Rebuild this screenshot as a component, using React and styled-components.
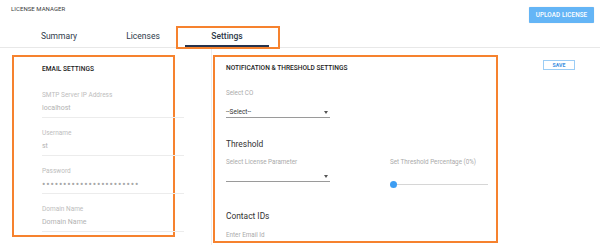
import styled, { createGlobalStyle } from "styled-components";

const GlobalStyle = createGlobalStyle`
  body {
    margin: 0;
    background: #fff;
    font-family: Roboto, "Liberation Sans", sans-serif;
    overflow: hidden;
  }
`;

const emailFields = [
  { label: "SMTP Server IP Address", value: "localhost" },
  { label: "Username", value: "st" },
  { label: "Password", value: "•".repeat(23), secret: true },
  { label: "Domain Name", value: "Domain Name" },
];

const App = () => {
  return (
    <Page>
      <GlobalStyle />
      <Header>
        <AppTitle>LICENSE MANAGER</AppTitle>
        <UploadButton>UPLOAD LICENSE</UploadButton>
      </Header>
      <TabBar>
        <Tab>Summary</Tab>
        <Tab>Licenses</Tab>
        <Tab $active $marked>
          Settings
        </Tab>
      </TabBar>
      <Content>
        <EmailBox>
          <SectionTitle>EMAIL SETTINGS</SectionTitle>
          {emailFields.map((f) => (
            <Field key={f.label}>
              <FieldLabel>{f.label}</FieldLabel>
              <FieldValue $secret={f.secret}>{f.value}</FieldValue>
            </Field>
          ))}
        </EmailBox>
        <RightPanel>
          <NotifyBox>
            <SectionTitle>NOTIFICATION &amp; THRESHOLD SETTINGS</SectionTitle>
            <Label $top={16}>Select CO</Label>
            <Select $top={9}>
              <span>--Select--</span>
              <Caret />
            </Select>
            <Heading $top={21}>Threshold</Heading>
            <Row>
              <Column $width={104}>
                <Label>Select License Parameter</Label>
                <Select $top={4}>
                  <span />
                  <Caret />
                </Select>
              </Column>
              <Column $width={98}>
                <Label>Set Threshold Percentage (0%)</Label>
                <Slider>
                  <Thumb />
                </Slider>
              </Column>
            </Row>
            <Heading $top={26}>Contact IDs</Heading>
            <Label $top={10}>Enter Email Id</Label>
          </NotifyBox>
          <SaveButton>SAVE</SaveButton>
        </RightPanel>
      </Content>
    </Page>
  );
};

export default App;

const Page = styled.div`
  width: 600px;
  height: 245px;
  overflow: hidden;
`;

const Header = styled.div`
  display: flex;
  justify-content: space-between;
  align-items: flex-start;
  height: 26px;
  padding: 0 6px 0 11px;
  box-sizing: border-box;
`;

const AppTitle = styled.div`
  margin-top: 5px;
  font-size: 6px;
  line-height: 8px;
  color: #3a3a3a;
  letter-spacing: 0.05px;
`;

const UploadButton = styled.button`
  margin-top: 7px;
  width: 65px;
  height: 16px;
  padding: 0;
  border: none;
  border-radius: 1px;
  background: #64b5f6;
  color: #fff;
  font-family: Roboto, "Liberation Sans", sans-serif;
  font-size: 6.3px;
  font-weight: 500;
  letter-spacing: 0.1px;
  box-shadow: 0 0 1px rgba(0, 0, 0, 0.2);
`;

const TabBar = styled.div`
  display: flex;
  padding-left: 17px;
  border-bottom: 1px solid #e8e8e8;
`;

const Tab = styled.div`
  position: relative;
  width: 84px;
  height: 21px;
  box-sizing: border-box;
  padding-top: 5px;
  text-align: center;
  font-size: 8.5px;
  line-height: 10px;
  color: #2f3a4a;
  font-weight: ${(p) => (p.$active ? 500 : 400)};
  border-bottom: 2px solid ${(p) => (p.$active ? "#27344d" : "transparent")};

  ${(p) =>
    p.$marked &&
    `
    &::after {
      content: "";
      position: absolute;
      top: 0;
      left: -9px;
      right: -11px;
      bottom: -4px;
      border: 2px solid #f6822e;
    }
  `}
`;

const Content = styled.div`
  display: flex;
  height: 197px;
`;

const EmailBox = styled.div`
  margin: 7px 0 0 12px;
  width: 163px;
  height: 182px;
  box-sizing: border-box;
  border: 2px solid #f6822e;
  padding: 7px 0 0 28px;
`;

const SectionTitle = styled.div`
  font-size: 6.6px;
  line-height: 10px;
  font-weight: 500;
  color: #222;
  margin-bottom: 6px;
`;

const Field = styled.div`
  width: 142px;
  padding: 11px 0 4px;
  border-bottom: 1px solid #ececec;
`;

const FieldLabel = styled.div`
  font-size: 6.5px;
  line-height: 9px;
  color: #bdbdbd;
  margin-bottom: 4px;
`;

const FieldValue = styled.div`
  font-size: ${(p) => (p.$secret ? "10px" : "7px")};
  line-height: 9px;
  color: ${(p) => (p.$secret ? "#a8a8a8" : "#b3b3b3")};
  letter-spacing: ${(p) => (p.$secret ? "0.85px" : "0")};
`;

const RightPanel = styled.div`
  flex: 1;
  display: flex;
  align-items: flex-start;
  margin-left: 36px;
  padding: 0 25px 0 1px;
  border-left: 1px solid #eeeeee;
`;

const NotifyBox = styled.div`
  margin-top: 7px;
  width: 285px;
  height: 188px;
  box-sizing: border-box;
  border: 2px solid #f6822e;
  padding: 6px 0 0 11px;
`;

const Label = styled.div`
  margin-top: ${(p) => p.$top || 0}px;
  font-size: 6.3px;
  line-height: 9px;
  color: #aaaaaa;
`;

const Select = styled.div`
  margin-top: ${(p) => p.$top || 0}px;
  width: 104px;
  height: 11px;
  box-sizing: border-box;
  display: flex;
  align-items: center;
  justify-content: space-between;
  padding-right: 2px;
  border-bottom: 1px solid #9a9a9a;
  font-size: 6.5px;
  color: #333;
`;

const Caret = styled.span`
  width: 0;
  height: 0;
  border-left: 2.5px solid transparent;
  border-right: 2.5px solid transparent;
  border-top: 3px solid #555;
`;

const Heading = styled.div`
  margin-top: ${(p) => p.$top || 0}px;
  font-size: 8.4px;
  line-height: 10px;
  color: #333;
`;

const Row = styled.div`
  display: flex;
  gap: 60px;
  margin-top: 9px;
`;

const Column = styled.div`
  width: ${(p) => p.$width}px;
`;

const Slider = styled.div`
  position: relative;
  margin: 17px 0 0 3px;
  width: 95px;
  height: 1px;
  background: #d6d6d6;
`;

const Thumb = styled.span`
  position: absolute;
  left: -3.5px;
  top: -3px;
  width: 7px;
  height: 7px;
  border-radius: 50%;
  background: #3d9df2;
`;

const SaveButton = styled.button`
  margin: 12px 0 0 auto;
  width: 32px;
  height: 10px;
  padding: 0;
  background: #fff;
  border: 1px solid #9ccdf5;
  color: #3d8fe0;
  font-family: Roboto, "Liberation Sans", sans-serif;
  font-size: 5.2px;
  font-weight: 700;
  line-height: 8px;
`;
